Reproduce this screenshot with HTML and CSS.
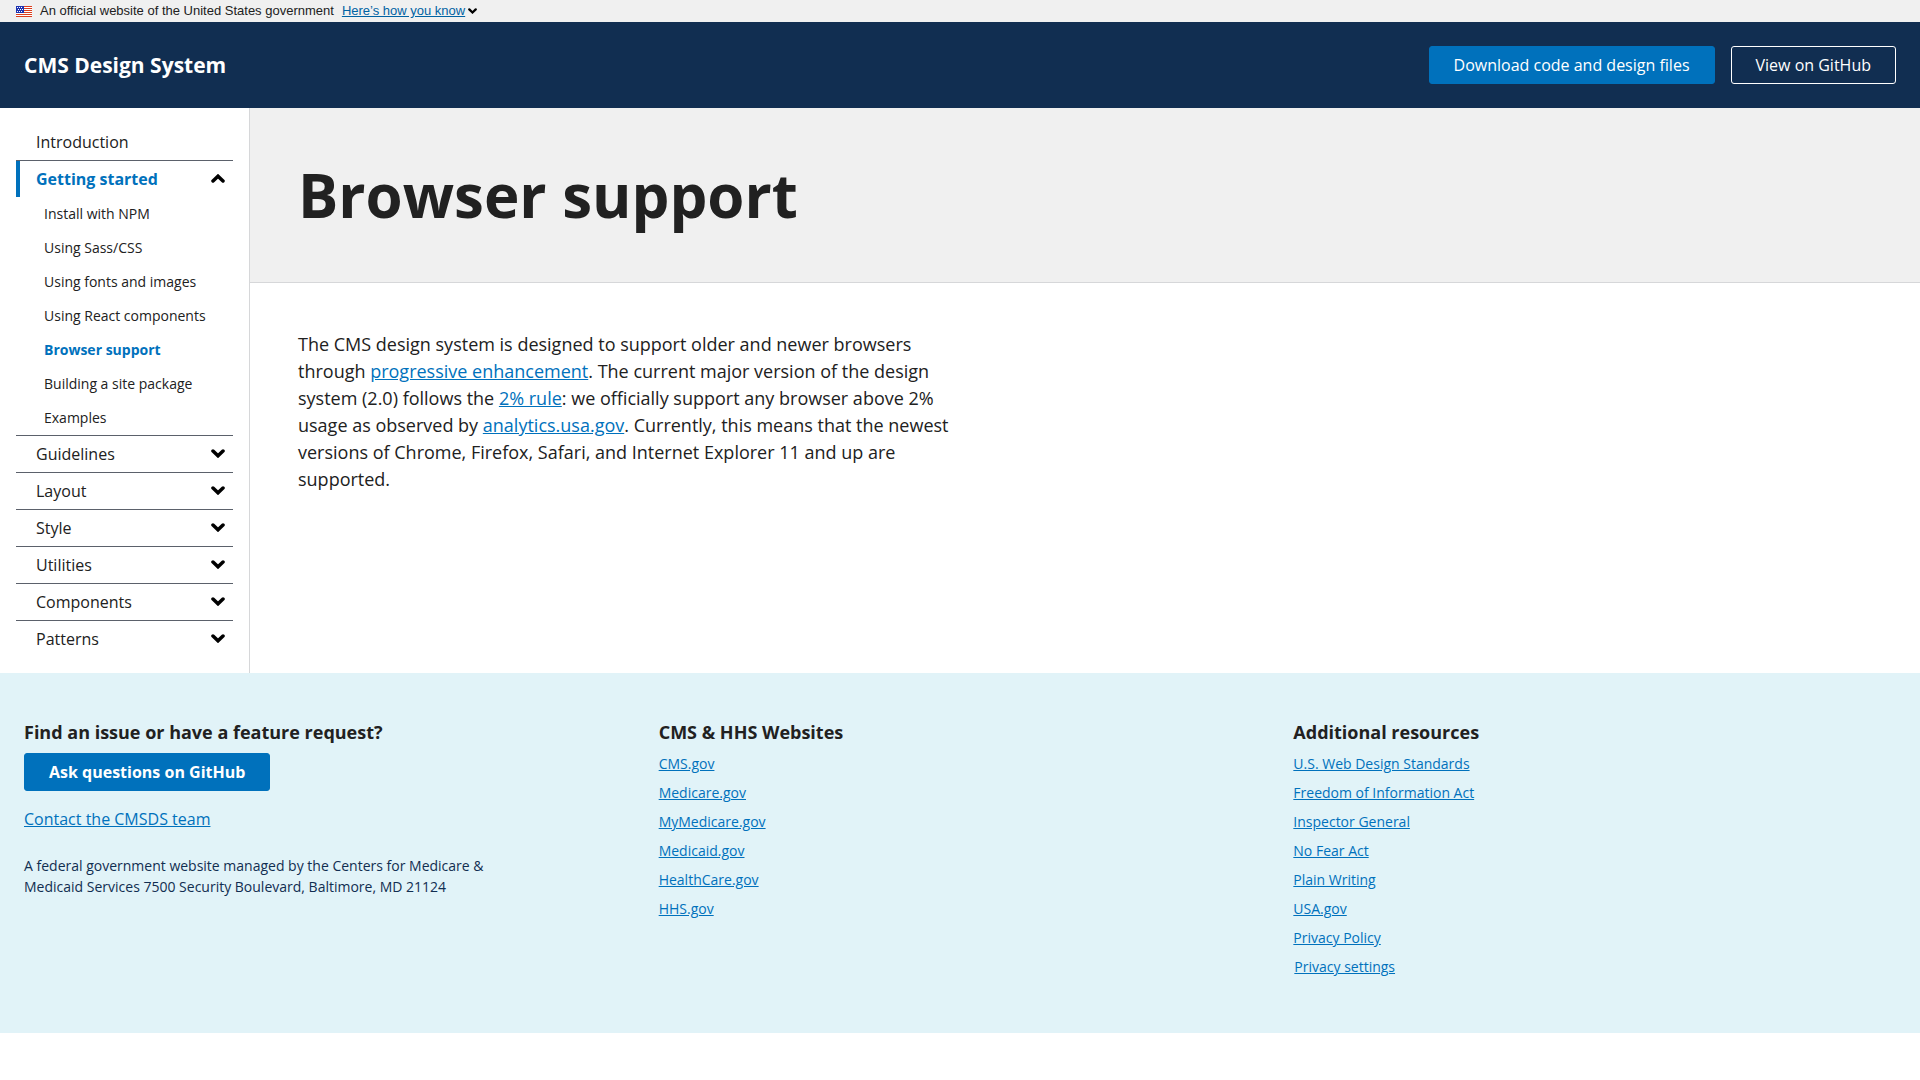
FILE: index.html
```html
<!DOCTYPE html>
<html lang="en">
<head>
<meta charset="utf-8">
<meta name="viewport" content="width=device-width, initial-scale=1">
<title>Browser support - CMS Design System</title>
<link rel="stylesheet" href="styles.css">
</head>
<body>
<svg class="defs" aria-hidden="true">
  <symbol id="chevron" viewBox="0 0 14 9"><path d="M2 2L7 6.8L12 2" fill="none" stroke="currentColor" stroke-width="3.5" stroke-linecap="round"/></symbol>
</svg>
<div class="banner">
  <svg class="flag" viewBox="0 0 16 11" aria-hidden="true">
    <path fill="#fff" d="M0 0h16v11H0z"/>
    <path fill="#db3e1f" d="M0 0h16v1H0zM0 2h16v1H0zM0 4h16v1H0zM0 6h16v1H0zM0 8h16v1H0zM0 10h16v1H0z"/>
    <path fill="#1e33b1" d="M0 0h8v7H0z"/>
    <path fill="#fff" d="M1 1h1v1H1zM3 1h1v1H3zM5 1h1v1H5zM2 3h1v1H2zM4 3h1v1H4zM6 3h1v1H6zM1 5h1v1H1zM3 5h1v1H3zM5 5h1v1H5z"/>
  </svg>
  <span>An official website of the United States government</span>
  <button class="banner-toggle" type="button"><span class="banner-label">Here’s how you know</span><svg class="banner-chevron" aria-hidden="true"><use href="#chevron"/></svg></button>
</div>
<header class="site-header">
  <span class="site-title">CMS Design System</span>
  <div class="actions">
    <a class="button" href="#download">Download code and design files</a>
    <a class="button button-outline" href="#github">View on GitHub</a>
  </div>
</header>
<div class="layout">
  <nav class="sidebar" aria-label="Main">
    <ul class="nav">
      <li><a class="nav-item" href="#introduction">Introduction</a></li>
      <li>
        <button class="nav-item current" type="button" aria-expanded="true">Getting started<svg class="chevron up" aria-hidden="true"><use href="#chevron"/></svg></button>
        <ul class="subnav">
          <li><a href="#npm">Install with NPM</a></li>
          <li><a href="#sass">Using Sass/CSS</a></li>
          <li><a href="#fonts">Using fonts and images</a></li>
          <li><a href="#react">Using React components</a></li>
          <li><a class="selected" href="#browser-support" aria-current="page">Browser support</a></li>
          <li><a href="#site-package">Building a site package</a></li>
          <li><a href="#examples">Examples</a></li>
        </ul>
      </li>
      <li><button class="nav-item" type="button">Guidelines<svg class="chevron" aria-hidden="true"><use href="#chevron"/></svg></button></li>
      <li><button class="nav-item" type="button">Layout<svg class="chevron" aria-hidden="true"><use href="#chevron"/></svg></button></li>
      <li><button class="nav-item" type="button">Style<svg class="chevron" aria-hidden="true"><use href="#chevron"/></svg></button></li>
      <li><button class="nav-item" type="button">Utilities<svg class="chevron" aria-hidden="true"><use href="#chevron"/></svg></button></li>
      <li><button class="nav-item" type="button">Components<svg class="chevron" aria-hidden="true"><use href="#chevron"/></svg></button></li>
      <li><button class="nav-item" type="button">Patterns<svg class="chevron" aria-hidden="true"><use href="#chevron"/></svg></button></li>
    </ul>
  </nav>
  <main class="main">
    <div class="page-header"><h1>Browser support</h1></div>
    <div class="content">
      <p>The CMS design system is designed to support older and newer browsers through <a href="#enhancement">progressive enhancement</a>. The current major version of the design system (2.0) follows the <a href="#rule">2% rule</a>: we officially support any browser above 2% usage as observed by <a href="#analytics">analytics.usa.gov</a>. Currently, this means that the newest versions of Chrome, Firefox, Safari, and Internet Explorer 11 and up are supported.</p>
    </div>
  </main>
</div>
<footer class="footer">
  <section>
    <h2>Find an issue or have a feature request?</h2>
    <a class="button button-bold" href="#questions">Ask questions on GitHub</a>
    <p class="contact"><a href="#contact">Contact the CMSDS team</a></p>
    <p class="address">A federal government website managed by the Centers for Medicare &amp; Medicaid Services 7500 Security Boulevard, Baltimore, MD 21124</p>
  </section>
  <section>
    <h2>CMS &amp; HHS Websites</h2>
    <ul class="links">
      <li><a href="#cms">CMS.gov</a></li>
      <li><a href="#medicare">Medicare.gov</a></li>
      <li><a href="#mymedicare">MyMedicare.gov</a></li>
      <li><a href="#medicaid">Medicaid.gov</a></li>
      <li><a href="#healthcare">HealthCare.gov</a></li>
      <li><a href="#hhs">HHS.gov</a></li>
    </ul>
  </section>
  <section>
    <h2>Additional resources</h2>
    <ul class="links">
      <li><a href="#standards">U.S. Web Design Standards</a></li>
      <li><a href="#foia">Freedom of Information Act</a></li>
      <li><a href="#inspector">Inspector General</a></li>
      <li><a href="#nofear">No Fear Act</a></li>
      <li><a href="#writing">Plain Writing</a></li>
      <li><a href="#usa">USA.gov</a></li>
      <li><a href="#privacy">Privacy Policy</a></li>
      <li><button class="link-button" type="button">Privacy settings</button></li>
    </ul>
  </section>
</footer>
</body>
</html>
```
FILE: styles.css
```css
* { box-sizing: border-box; }
body {
  margin: 0;
  background: #fff;
  color: #212121;
  font: 16px/24px "Open Sans", sans-serif;
}
h1, h2, p, ul { margin: 0; padding: 0; }
ul { list-style: none; }
button { margin: 0; padding: 0; border: 0; background: none; font: inherit; color: inherit; cursor: pointer; }
a { color: #0071bc; }
.defs { display: none; }

.banner {
  display: flex;
  align-items: center;
  gap: 8px;
  padding: 2px 16px;
  background: #f0f0f0;
  font: 13px/18px "Liberation Sans", sans-serif;
}
.flag { width: 16px; height: 11px; }
.banner-toggle { display: flex; align-items: center; gap: 3px; }
.banner-label { color: #0062a3; text-decoration: underline; }
.banner-chevron { width: 9px; height: 6px; color: #000; }

.site-header {
  display: flex;
  align-items: center;
  justify-content: space-between;
  padding: 24px;
  background: #112e51;
}
.site-title { color: #fff; font-size: 21px; font-weight: 700; line-height: 28px; }
.actions { display: flex; gap: 16px; }
.button {
  display: inline-block;
  padding: 6px 24px;
  border: 1px solid #0071bc;
  border-radius: 3px;
  background: #0071bc;
  color: #fff;
  text-decoration: none;
}
.button-outline { border-color: #fff; background: transparent; }
.button-bold { font-weight: 700; }

.layout { display: flex; }
.sidebar { flex: 0 0 250px; padding: 16px; border-right: 1px solid #d6d7d9; }
.nav > li + li { border-top: 1px solid #5b616b; }
.nav-item {
  display: flex;
  align-items: center;
  justify-content: space-between;
  width: 100%;
  padding: 6px 8px 6px 16px;
  border-left: 4px solid transparent;
  color: #212121;
  text-align: left;
  text-decoration: none;
}
.nav-item.current { border-left-color: #0071bc; color: #0071bc; font-weight: 700; }
.chevron { width: 14px; height: 10px; padding-bottom: 1px; color: #000; }
.up { padding: 1px 0 0; transform: rotate(180deg); }
.subnav a { display: block; padding-left: 28px; color: #212121; font-size: 14px; line-height: 34px; text-decoration: none; }
.subnav .selected { color: #0071bc; font-weight: 700; }

.main { flex: 1; min-width: 0; }
.page-header { padding: 48px; border-bottom: 1px solid #d6d7d9; background: #f0f0f0; }
h1 { font-size: 60px; line-height: 78px; }
.content { padding: 48px; font-size: 18px; line-height: 27px; }
.content p { max-width: 664px; }

.footer {
  display: grid;
  grid-template-columns: repeat(3, 1fr);
  gap: 32px;
  padding: 48px 24px;
  background: #e1f3f8;
}
h2 { margin-bottom: 10px; font-size: 18px; line-height: 22px; }
.footer .button { display: block; width: fit-content; }
.contact { margin: 16px 0 24px; }
.address { max-width: 480px; color: #112e51; font-size: 14px; line-height: 21px; }
.links li { display: flex; margin-bottom: 8px; font-size: 14px; line-height: 21px; }
.link-button { padding: 0 1px; color: #0071bc; text-decoration: underline; }
```
